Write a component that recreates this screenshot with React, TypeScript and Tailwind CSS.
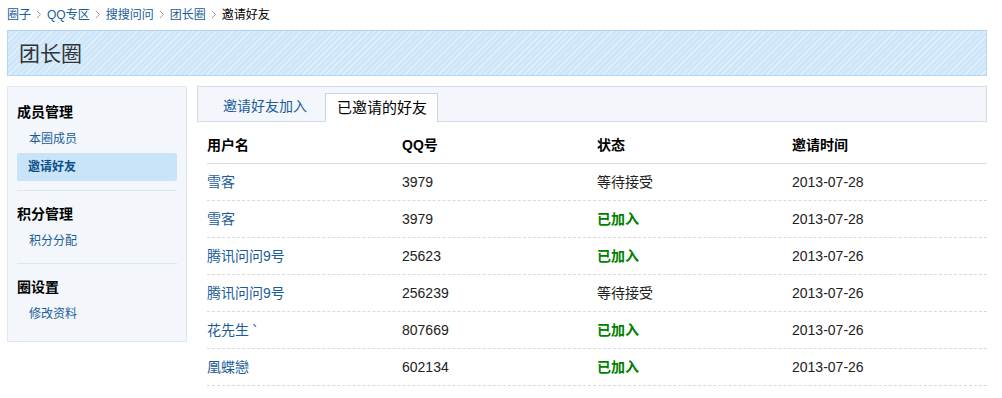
import React from 'react';

const font = "font-['Liberation_Sans','Noto_Sans_CJK_SC',sans-serif]";

const crumbs = ['圈子', 'QQ专区', '搜搜问问', '团长圈'];

const rows = [
  { name: '雪客', qq: '3979', joined: false, date: '2013-07-28' },
  { name: '雪客', qq: '3979', joined: true, date: '2013-07-28' },
  { name: '腾讯问问9号', qq: '25623', joined: true, date: '2013-07-26' },
  { name: '腾讯问问9号', qq: '256239', joined: false, date: '2013-07-26' },
  { name: '花先生 ՝', qq: '807669', joined: true, date: '2013-07-26' },
  { name: '凰蝶戀', qq: '602134', joined: true, date: '2013-07-26' },
];

function Chevron() {
  return (
    <svg width="6" height="9" viewBox="0 0 6 9" className="mx-[5px]">
      <path d="M1 1l3.5 3.5L1 8" fill="none" stroke="#a0a0a0" strokeWidth="1" />
    </svg>
  );
}

function Sidebar() {
  const sections = [
    { title: '成员管理', items: ['本圈成员', '邀请好友'] },
    { title: '积分管理', items: ['积分分配'] },
    { title: '圈设置', items: ['修改资料'] },
  ];
  return (
    <aside className="w-[180px] shrink-0 self-start border border-[#dde8f0] bg-[#f3f7fb] px-[9px]">
      {sections.map((s, i) => (
        <div
          key={s.title}
          className={
            (i === 0 ? 'pt-[12px] pb-[9px] border-b border-[#dde6ee]' : '') +
            (i === 1 ? 'pt-[10px] pb-[8px] border-b border-[#dde6ee]' : '') +
            (i === 2 ? 'pt-[10px] pb-[13px]' : '')
          }
        >
          <div className="h-[26px] leading-[26px] text-[14px] font-bold text-black">{s.title}</div>
          {s.items.map((item) =>
            item === '邀请好友' ? (
              <div
                key={item}
                className="h-[28px] leading-[28px] rounded-[2px] bg-[#c9e4f9] pl-[11px] text-[12px] font-bold text-[#0b4f8a]"
              >
                {item}
              </div>
            ) : (
              <div key={item} className="h-[28px] leading-[28px] pl-[12px] text-[12px] text-[#1a5c9a]">
                {item}
              </div>
            )
          )}
        </div>
      ))}
    </aside>
  );
}

function Main() {
  return (
    <section className="flex-1">
      <div className="flex h-[36px] items-end border border-[#cddcea] bg-[#f3f7fb]">
        <div className="h-[29px] leading-[29px] pl-[25px] pr-[18px] text-[14px] text-[#1a5c9a]">邀请好友加入</div>
        <div className="-mb-px h-[29px] leading-[28px] border border-b-0 border-[#c4d6e6] bg-white pl-[11px] pr-[10px] text-[15px] text-black">
          已邀请的好友
        </div>
      </div>
      <div className="ml-[10px] mt-[5px]">
        <div className="grid h-[37px] grid-cols-4 items-center border-b border-[#d8dde3] text-[14px] font-bold text-black">
          <div>用户名</div>
          <div>QQ号</div>
          <div>状态</div>
          <div>邀请时间</div>
        </div>
        {rows.map((r, i) => (
          <div
            key={i}
            className="grid h-[37px] grid-cols-4 items-center border-b border-dashed border-[#d9d9d9] text-[14px] text-[#222]"
          >
            <div className="text-[#1a5c9a]">{r.name}</div>
            <div>{r.qq}</div>
            <div className={r.joined ? 'font-bold text-[#008000]' : 'text-[#222]'}>
              {r.joined ? '已加入' : '等待接受'}
            </div>
            <div>{r.date}</div>
          </div>
        ))}
      </div>
    </section>
  );
}

export default function App() {
  return (
    <div className={`${font} h-[398px] w-[1002px] overflow-hidden bg-white px-[7px] pr-[15px]`}>
      <nav className="flex h-[30px] items-center pb-[1px] text-[12px]">
        {crumbs.map((c) => (
          <React.Fragment key={c}>
            <span className="text-[#1a5c9a]">{c}</span>
            <Chevron />
          </React.Fragment>
        ))}
        <span className="text-black">邀请好友</span>
      </nav>
      <header className="flex h-[46px] items-center border border-[#b5d6f2] bg-[repeating-linear-gradient(135deg,#cde6fa_0px,#cde6fa_3px,#e4f1fd_3px,#e4f1fd_4px)] pl-[11px]">
        <h1 className="text-[21px] leading-none text-[#333]">团长圈</h1>
      </header>
      <div className="mt-[10px] flex gap-[10px]">
        <Sidebar />
        <Main />
      </div>
    </div>
  );
}
